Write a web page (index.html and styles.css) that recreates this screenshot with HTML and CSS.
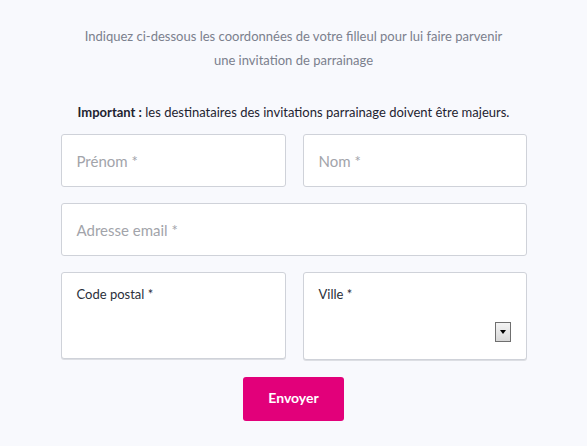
FILE: index.html
```html
<!DOCTYPE html>
<html lang="fr">
<head>
<meta charset="utf-8">
<link rel="stylesheet" href="styles.css">
</head>
<body>
<div class="wrap">
  <p class="intro">Indiquez ci-dessous les coordonnées de votre filleul pour lui faire parvenir<br>une invitation de parrainage</p>
  <p class="important"><strong>Important :</strong> les destinataires des invitations parrainage doivent être majeurs.</p>
  <div class="form">
    <div class="field"><span class="ph">Prénom *</span></div>
    <div class="field"><span class="ph">Nom *</span></div>
    <div class="field full"><span class="ph">Adresse email *</span></div>
    <div class="field tall"><span class="label">Code postal *</span></div>
    <div class="field tall ville">
      <span class="label">Ville *</span>
      <span class="arrow"><span class="tri"></span></span>
    </div>
  </div>
  <div class="actions"><button class="btn">Envoyer</button></div>
</div>
</body>
</html>
```
FILE: styles.css
```css
html, body { margin: 0; padding: 0; }
body {
  background: #f8f9fd;
  font-family: Lato, "Open Sans", sans-serif;
  width: 587px;
  height: 446px;
  overflow: hidden;
}
.wrap { width: 466px; margin: 0 auto; }
.intro {
  margin: 0;
  padding-top: 24px;
  text-align: center;
  color: #7b808d;
  font-size: 13px;
  line-height: 24px;
}
.important {
  margin: 0;
  padding-top: 30px;
  text-align: center;
  color: #1e2330;
  font-size: 13px;
  line-height: 20px;
}
.important strong { font-weight: 700; }
.form {
  margin-top: 12px;
  display: grid;
  grid-template-columns: 225px 224px;
  column-gap: 17px;
  row-gap: 16px;
  align-items: start;
}
.field {
  background: #fff;
  border: 1px solid #cfd2d9;
  border-radius: 3px;
  height: 53px;
  box-sizing: border-box;
  display: flex;
  align-items: center;
  padding: 0 15px;
}
.full { grid-column: 1 / 3; }
.ph { color: #a2a4aa; font-size: 15px; }
.tall {
  height: 87px;
  flex-direction: column;
  align-items: flex-start;
  justify-content: space-between;
  padding: 13px 15px 17px;
  box-shadow: 0 1px 0 #dcdee3;
}
.ville { height: 88px; }
.label { color: #2a2f3a; font-size: 13px; line-height: 16px; }
.arrow {
  align-self: flex-end;
  width: 16px;
  height: 20px;
  box-sizing: border-box;
  border: 1px solid #6f6f6f;
  background: linear-gradient(#f4f4f4, #d8d8d8);
  display: flex;
  align-items: center;
  justify-content: center;
}
.tri {
  width: 0; height: 0;
  border-left: 3.5px solid transparent;
  border-right: 3.5px solid transparent;
  border-top: 4px solid #000;
}
.actions { display: flex; justify-content: center; margin-top: 17px; }
.btn {
  width: 101px;
  height: 44px;
  background: #e2007a;
  color: #fff;
  border: none;
  border-radius: 3px;
  font-family: Lato, "Open Sans", sans-serif;
  font-weight: 700;
  font-size: 14px;
  padding: 0 0 3px;
}
```
